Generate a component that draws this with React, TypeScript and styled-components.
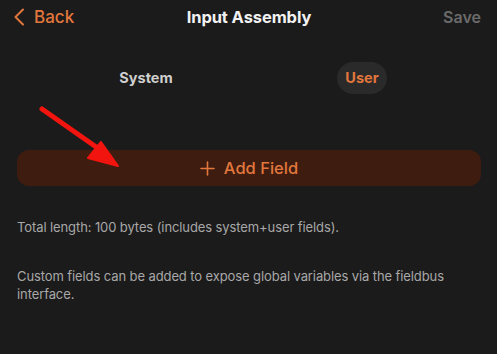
import React from 'react';
import styled, {createGlobalStyle} from 'styled-components';

const GlobalStyle = createGlobalStyle`
    html, body {
        margin: 0;
        padding: 0;
        background: #1b1b1b;
        font-family: Inter, "Noto Sans", sans-serif;
    }
`;

const ORANGE = '#e2773d';

export default function App() {
    return (
        <>
            <GlobalStyle/>
            <Page>
                <TopBar>
                    <BackButton>
                        <svg width="12" height="18" viewBox="0 0 12 18" fill="none">
                            <path d="M10 1.5L2.5 9L10 16.5" stroke={ORANGE} strokeWidth="2" strokeLinecap="round" strokeLinejoin="round"/>
                        </svg>
                        <span>Back</span>
                    </BackButton>
                    <Title>Input Assembly</Title>
                    <SaveButton>Save</SaveButton>
                </TopBar>

                <Segments>
                    <Segment>System</Segment>
                    <Segment $active>User</Segment>
                </Segments>

                <AddButton>
                    <svg width="15" height="15" viewBox="0 0 15 15" fill="none">
                        <path d="M7.5 1V14M1 7.5H14" stroke={ORANGE} strokeWidth="1.6" strokeLinecap="round"/>
                    </svg>
                    <span>Add Field</span>
                </AddButton>

                <Note>Total length: 100 bytes (includes system+user fields).</Note>
                <Note $gap>Custom fields can be added to expose global variables via the fieldbus interface.</Note>

                <Annotation width="110" height="80" viewBox="0 0 110 80">
                    <path d="M3 3L70 50" stroke="#f2140e" strokeWidth="5" strokeLinecap="round"/>
                    <path d="M79 60L49 52L62 36Z" fill="#f2140e" stroke="#f2140e" strokeWidth="2" strokeLinejoin="round"/>
                </Annotation>
            </Page>
        </>
    );
}

const Page = styled.div`
    position: relative;
    width: 497px;
    height: 354px;
    box-sizing: border-box;
    padding: 0 16px 0 17px;
    background: #1b1b1b;
    overflow: hidden;
`;

const TopBar = styled.div`
    display: grid;
    grid-template-columns: 1fr auto 1fr;
    align-items: center;
    height: 33px;
`;

const BackButton = styled.div`
    display: flex;
    align-items: center;
    gap: 9px;
    margin-left: -4px;
    color: ${ORANGE};
    font-size: 17px;
    font-weight: 500;
`;

const Title = styled.div`
    color: #f2f2f2;
    font-size: 16.5px;
    font-weight: 700;
    letter-spacing: -0.1px;
`;

const SaveButton = styled.div`
    justify-self: end;
    color: #6b6b6b;
    font-size: 16px;
    font-weight: 600;
`;

const Segments = styled.div`
    display: grid;
    grid-template-columns: 1fr 1fr;
    justify-items: center;
    margin-top: 29px;
    padding: 0 11px 0 21px;
`;

const Segment = styled.div<{ $active?: boolean }>`
    height: 32px;
    line-height: 32px;
    padding: 0 8px;
    border-radius: 16px;
    font-size: 14.5px;
    font-weight: 700;
    color: ${p => p.$active ? ORANGE : '#cfcfcf'};
    background: ${p => p.$active ? '#2a2a2a' : 'transparent'};
`;

const AddButton = styled.div`
    display: flex;
    align-items: center;
    justify-content: center;
    gap: 9px;
    height: 36px;
    margin-top: 56px;
    border-radius: 12px;
    background: #3e1d10;
    color: ${ORANGE};
    font-size: 16.5px;
    font-weight: 500;
`;

const Note = styled.p<{ $gap?: boolean }>`
    margin: ${p => p.$gap ? '31px' : '32px'} 0 0;
    color: #a8a8a8;
    font-size: 13px;
    line-height: 18px;
    letter-spacing: -0.1px;
    max-width: 440px;
`;

const Annotation = styled.svg`
    position: absolute;
    left: 39px;
    top: 106px;
    pointer-events: none;
`;
